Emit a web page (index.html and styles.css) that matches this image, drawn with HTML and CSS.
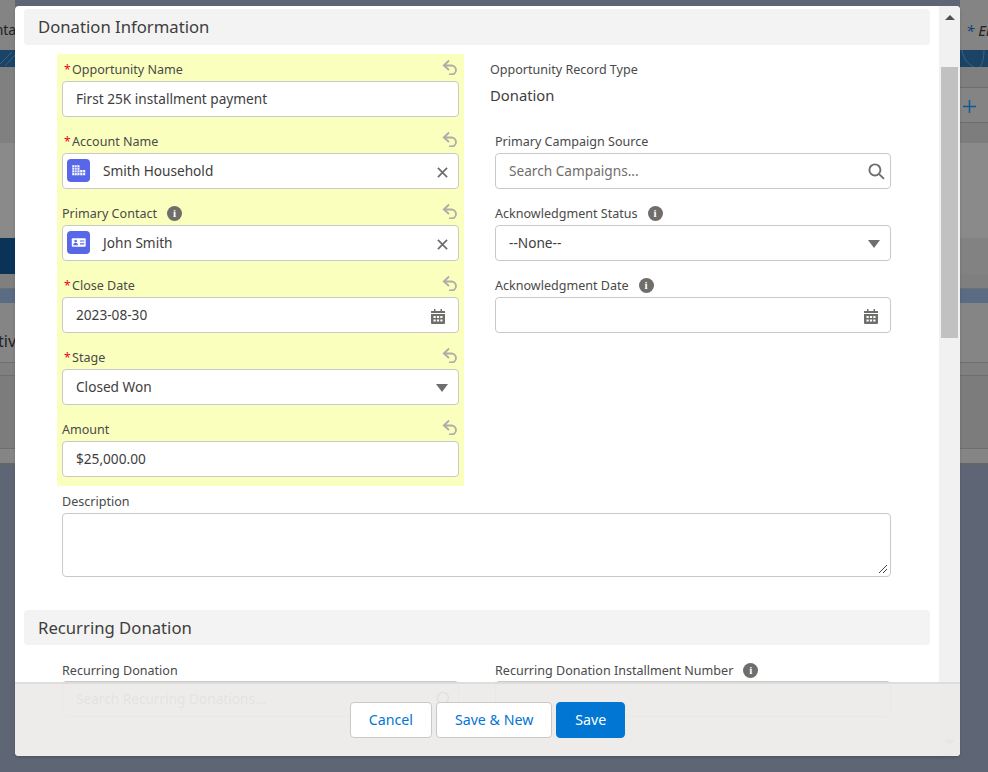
FILE: index.html
```html
<!DOCTYPE html>
<html lang="en">
<head>
<meta charset="utf-8">
<title>Donation Information</title>
<link rel="stylesheet" href="styles.css">
</head>
<body>
<div class="backdrop">
  <div class="bg-strip bg-left">
    <div class="bl bl-a"><span class="bg-nta">Contact</span></div>
    <div class="bl bl-c"><svg class="bg-arc" viewBox="0 0 15 17"><path d="M0 14 12 2M5 16 15 5"/></svg></div>
    <div class="bl bl-d"></div>
    <div class="bl bl-e"></div>
    <div class="bl bl-f"></div>
    <div class="bl bl-g"></div>
    <div class="bl bl-blue"></div>
    <div class="bl bl-h"><span class="bg-tiv">tiv</span></div>
    <div class="bl bl-i"></div>
    <div class="bl bl-j"></div>
    <div class="bl bl-k"></div>
  </div>
  <div class="bg-strip bg-right">
    <div class="bl bl-a"><span class="bg-er"><span class="bg-star">*</span>Er</span></div>
    <div class="bl bl-c"><svg class="bg-arc" viewBox="0 0 28 17"><path d="M2 0c1 9 7 15 12 17M20 17c3-4 4-10 4-17"/></svg></div>
    <div class="bl br-d"></div>
    <div class="bl br-e"><svg class="bg-plus" viewBox="0 0 13 13"><path d="M6.500 0v13M0 6.500h13"/></svg></div>
    <div class="bl br-f"></div>
    <div class="bl bl-e"></div>
    <div class="bl br-h"></div>
    <div class="bl bl-g"></div>
    <div class="bl bl-blue"></div>
    <div class="bl bl-h"></div>
    <div class="bl bl-i"></div>
    <div class="bl bl-j"></div>
    <div class="bl bl-k"></div>
  </div>
</div>

<main class="modal">
  <div class="scrollbar">
    <span class="arrow arrow-up"></span>
    <div class="thumb"></div>
    <span class="arrow arrow-down"></span>
  </div>
  <div class="content">
    <h2 class="section">Donation Information</h2>
    <div class="columns">
      <div class="col">
        <div class="highlight">
          <div class="field">
            <div class="label-row"><span class="req">*</span><label>Opportunity Name</label><svg class="undo" viewBox="0 0 16 16"><path d="M7 1.500 1.800 6.500 7 11M2 6.500h7.500a4.500 4.500 0 0 1 0 9H7"/></svg></div>
            <div class="input"><span class="value">First 25K installment payment</span></div>
          </div>
          <div class="field">
            <div class="label-row"><span class="req">*</span><label>Account Name</label><svg class="undo" viewBox="0 0 16 16"><path d="M7 1.500 1.800 6.500 7 11M2 6.500h7.500a4.500 4.500 0 0 1 0 9H7"/></svg></div>
            <div class="input lookup">
              <span class="obj"><svg viewBox="0 0 24 24"><path fill="#fff" d="M5.500 6.500H13V17H5.500zM13.800 11.500H19V17h-5.200z"/><path class="obj-grid" d="M5.500 9h7.500M5.500 11.500h7.500M5.500 14h7.500M8 6.500V17M10.500 6.500V17M13.800 14.200H19M16.400 11.500V17"/></svg></span>
              <span class="value">Smith Household</span>
              <svg class="clear" viewBox="0 0 12 12"><path d="M1 1l10 10M11 1 1 11"/></svg>
            </div>
          </div>
          <div class="field">
            <div class="label-row"><label>Primary Contact</label><span class="info">i</span><svg class="undo" viewBox="0 0 16 16"><path d="M7 1.500 1.800 6.500 7 11M2 6.500h7.500a4.500 4.500 0 0 1 0 9H7"/></svg></div>
            <div class="input lookup">
              <span class="obj"><svg viewBox="0 0 24 24"><rect x="5" y="7.500" width="14.500" height="9" rx="1" fill="#fff"/><circle cx="9" cy="10.500" r="1.400" fill="#5867e8"/><path fill="#5867e8" d="M6.500 14.800c0-1.600 1-2.200 2.500-2.200s2.500.6 2.500 2.200zM13.500 9.800H18V11h-4.500zM13.500 12.800H18V14h-4.500z"/></svg></span>
              <span class="value">John Smith</span>
              <svg class="clear" viewBox="0 0 12 12"><path d="M1 1l10 10M11 1 1 11"/></svg>
            </div>
          </div>
          <div class="field">
            <div class="label-row"><span class="req">*</span><label>Close Date</label><svg class="undo" viewBox="0 0 16 16"><path d="M7 1.500 1.800 6.500 7 11M2 6.500h7.500a4.500 4.500 0 0 1 0 9H7"/></svg></div>
            <div class="input">
              <span class="value">2023-08-30</span>
              <svg class="cal" viewBox="0 0 14 15"><path fill="#706e6b" d="M3 0h1.500v2H3zM9.500 0H11v2H9.500zM0 2h14v2H0zM0 5h14v9a1 1 0 0 1-1 1H1a1 1 0 0 1-1-1z"/><path fill="#fff" d="M2.500 7h2.200v2H2.500zM5.900 7h2.200v2H5.900zM9.300 7h2.200v2H9.300zM2.500 10.500h2.200v2H2.500zM5.900 10.500h2.200v2H5.900zM9.300 10.500h2.200v2H9.300z"/></svg>
            </div>
          </div>
          <div class="field">
            <div class="label-row"><span class="req">*</span><label>Stage</label><svg class="undo" viewBox="0 0 16 16"><path d="M7 1.500 1.800 6.500 7 11M2 6.500h7.500a4.500 4.500 0 0 1 0 9H7"/></svg></div>
            <div class="input">
              <span class="value">Closed Won</span>
              <span class="caret"></span>
            </div>
          </div>
          <div class="field">
            <div class="label-row"><label>Amount</label><svg class="undo" viewBox="0 0 16 16"><path d="M7 1.500 1.800 6.500 7 11M2 6.500h7.500a4.500 4.500 0 0 1 0 9H7"/></svg></div>
            <div class="input"><span class="value">$25,000.00</span></div>
          </div>
        </div>
      </div>
      <div class="col col-right">
        <div class="field readonly">
          <div class="label-row"><label>Opportunity Record Type</label></div>
          <div class="ro-value">Donation</div>
        </div>
        <div class="field">
          <div class="label-row"><label>Primary Campaign Source</label></div>
          <div class="input">
            <span class="placeholder">Search Campaigns...</span>
            <svg class="search" viewBox="0 0 16 16"><circle cx="6.500" cy="6.500" r="5.200"/><path d="M10.500 10.500 15 15"/></svg>
          </div>
        </div>
        <div class="field">
          <div class="label-row"><label>Acknowledgment Status</label><span class="info">i</span></div>
          <div class="input">
            <span class="value">--None--</span>
            <span class="caret"></span>
          </div>
        </div>
        <div class="field">
          <div class="label-row"><label>Acknowledgment Date</label><span class="info">i</span></div>
          <div class="input">
            <svg class="cal" viewBox="0 0 14 15"><path fill="#706e6b" d="M3 0h1.500v2H3zM9.500 0H11v2H9.500zM0 2h14v2H0zM0 5h14v9a1 1 0 0 1-1 1H1a1 1 0 0 1-1-1z"/><path fill="#fff" d="M2.500 7h2.200v2H2.500zM5.900 7h2.200v2H5.900zM9.300 7h2.200v2H9.300zM2.500 10.500h2.200v2H2.500zM5.900 10.500h2.200v2H5.900zM9.300 10.500h2.200v2H9.300z"/></svg>
          </div>
        </div>
      </div>
    </div>
    <div class="field description">
      <div class="label-row"><label>Description</label></div>
      <div class="textarea">
        <svg class="grip" viewBox="0 0 10 10"><path d="M9 1 1 9M9 5 5 9"/></svg>
      </div>
    </div>
    <h2 class="section section-2">Recurring Donation</h2>
    <div class="columns columns-2">
      <div class="col">
        <div class="field">
          <div class="label-row"><label>Recurring Donation</label></div>
          <div class="input">
            <span class="placeholder">Search Recurring Donations...</span>
            <svg class="search" viewBox="0 0 16 16"><circle cx="6.500" cy="6.500" r="5.200"/><path d="M10.500 10.500 15 15"/></svg>
          </div>
        </div>
      </div>
      <div class="col col-right">
        <div class="field">
          <div class="label-row"><label>Recurring Donation Installment Number</label><span class="info">i</span></div>
          <div class="input"></div>
        </div>
      </div>
    </div>
  </div>
  <footer class="footer">
    <button class="btn">Cancel</button>
    <button class="btn">Save &amp; New</button>
    <button class="btn btn-primary">Save</button>
  </footer>
</main>
</body>
</html>
```

FILE: styles.css
```css
* { box-sizing: border-box; }
html, body { margin: 0; height: 100%; overflow: hidden; }
body {
  width: 988px;
  height: 772px;
  background: #5e6675;
  font-family: "Noto Sans", "Open Sans", sans-serif;
  color: #3e3e3c;
  position: relative;
}
.backdrop { position: absolute; inset: 0; }
.bg-strip {
  position: absolute;
  top: 0;
  display: flex;
  flex-direction: column;
  height: 465px;
  overflow: hidden;
}
.bg-left { left: 0; width: 15px; }
.bg-right { left: 960px; width: 28px; }
.bl { width: 100%; background: #848484; position: relative; flex: none; }
.bl-a { height: 50px; }
.bl-c { height: 17px; background: #1b4366; }
.bl-d { height: 76px; background: #808080; }
.bl-e { height: 95px; background: #8a8a8a; }
.bl-f { height: 36px; background: #0b3358; }
.bl-g { height: 15px; background: #7f7f7f; border-bottom: 1px solid #6f6f6f; }
.bl-blue { height: 14px; background: #5a6b84; }
.bl-h { height: 59px; background: #858585; }
.bl-i { height: 14px; background: #808080; border-top: 1px solid #6e6e6e; border-bottom: 1px solid #6e6e6e; }
.bl-j { height: 72px; background: #7c7c7c; }
.bl-k { height: 17px; background: #858585; border-top: 1px solid #6e6e6e; border-bottom: 2px solid #666; }
.br-d { height: 21px; background: #7f7f7f; border-bottom: 1px solid #6e6e6e; }
.br-e { height: 35px; background: #848484; border-bottom: 1px solid #6e6e6e; }
.br-f { height: 20px; background: #7d7d7d; }
.br-h { height: 36px; background: #828282; }
.bg-arc { position: absolute; inset: 0; width: 100%; height: 100%; fill: none; stroke: #3a6285; stroke-width: 1; }
.bg-nta, .bg-tiv, .bg-er {
  position: absolute;
  font-size: 14px;
  line-height: 20px;
  color: #222;
  white-space: nowrap;
}
.bg-nta { top: 20px; right: -13px; }
.bg-tiv { top: 28px; left: -2px; font-size: 16px; }
.bg-er { top: 20px; left: 6px; font-style: italic; font-size: 15px; }
.bg-star { color: #0b3f70; margin-right: 4px; }
.bg-plus { position: absolute; top: 12px; left: 3px; width: 13px; height: 13px; fill: none; stroke: #0e5a97; stroke-width: 1.500; }

.modal {
  position: absolute;
  left: 15px;
  top: 6px;
  width: 945px;
  height: 750px;
  background: #fff;
  border-radius: 4px;
  overflow: hidden;
  box-shadow: 0 2px 3px rgba(0, 0, 0, .16);
}
.content { padding: 3px 9px 0 9px; width: 924px; }
.section {
  margin: 0;
  height: 36px;
  padding-left: 14px;
  background: #f3f3f3;
  border-radius: 4px;
  font-size: 16.7px;
  font-weight: 400;
  line-height: 36px;
  color: #3e3e3c;
}
.columns { display: flex; padding-left: 33px; margin-top: 9px; }
.col { width: 407px; flex: none; }
.col-right { margin-left: 31px; width: 396px; }
.highlight { background: #fbffbe; padding: 0 5px; }
.field { height: 72px; position: relative; }
.label-row {
  display: flex;
  align-items: center;
  height: 27px;
  font-size: 12.55px;
  color: #4a4a4a;
  padding-top: 3px;
}
.req { color: #ea001e; width: 8px; font-size: 12px; margin-left: 2px; }
.info {
  width: 15px;
  height: 15px;
  border-radius: 50%;
  background: #706e6b;
  color: #fff;
  font-size: 11px;
  font-weight: 700;
  line-height: 15px;
  text-align: center;
  margin-left: 10px;
  font-family: "Liberation Serif", serif;
}
.undo {
  position: absolute;
  right: 1px;
  top: 5px;
  width: 16px;
  height: 16px;
  fill: none;
  stroke: #aeaca8;
  stroke-width: 1.800;
}
.input {
  height: 36px;
  background: #fff;
  border: 1px solid #c9c9c9;
  border-radius: 4px;
  display: flex;
  align-items: center;
  padding: 0 13px 2px;
  font-size: 13.65px;
  position: relative;
}
.value { color: #3e3e3c; }
.placeholder { color: #706e6b; }
.lookup { padding-left: 4px; }
.obj {
  width: 23px;
  height: 23px;
  border-radius: 4px;
  background: #5867e8;
  flex: none;
  margin-right: 13px;
  display: flex;
}
.obj svg { width: 23px; height: 23px; }
.obj-grid { fill: none; stroke: #5867e8; stroke-width: .7; }
.clear {
  position: absolute;
  right: 10px;
  top: 13px;
  width: 11px;
  height: 11px;
  fill: none;
  stroke: #706e6b;
  stroke-width: 1.900;
}
.search {
  position: absolute;
  right: 5px;
  top: 9px;
  width: 17px;
  height: 17px;
  fill: none;
  stroke: #706e6b;
  stroke-width: 1.800;
}
.cal { position: absolute; right: 13px; top: 11px; width: 14px; height: 15px; }
.col-right .cal { right: 12px; }
.caret {
  position: absolute;
  right: 10px;
  top: 14px;
  border-left: 6px solid transparent;
  border-right: 6px solid transparent;
  border-top: 8px solid #706e6b;
}
.ro-value { font-size: 14.8px; color: #3e3e3c; line-height: 20px; margin-top: 4px; margin-left: -5px; }
.readonly .label-row { margin-left: -5px; }
.description { margin-left: 38px; height: 124px; width: 829px; }
.textarea {
  height: 64px;
  border: 1px solid #c9c9c9;
  border-radius: 4px;
  position: relative;
}
.grip {
  position: absolute;
  right: 2px;
  bottom: 2px;
  width: 10px;
  height: 10px;
  fill: none;
  stroke: #444;
  stroke-width: 1;
}
.section-2 { height: 35px; line-height: 36px; }
.columns-2 { padding-left: 38px; margin-top: 9px; }
.columns-2 .col { width: 397px; }
.columns-2 .col-right { margin-left: 36px; width: 396px; }
.columns-2 .label-row { padding-top: 5px; }
.scrollbar {
  position: absolute;
  right: 0;
  top: 0;
  width: 21px;
  height: 100%;
  background: #f1f1f1;
}
.thumb {
  position: absolute;
  left: 2px;
  top: 61px;
  width: 17px;
  height: 271px;
  background: #c1c1c1;
}
.arrow { position: absolute; left: 6px; border-left: 5px solid transparent; border-right: 5px solid transparent; }
.arrow-up { top: 9px; border-bottom: 5px solid #505050; }
.arrow-down { bottom: 11px; border-top: 5px solid #a3a3a3; }
.footer {
  position: absolute;
  left: 0;
  right: 0;
  bottom: 0;
  height: 74px;
  background: rgba(236, 235, 233, .93);
  border-top: 2px solid rgba(205, 205, 205, .5);
  display: flex;
  justify-content: center;
  gap: 4px;
  padding-top: 18px;
}
.btn {
  height: 36px;
  padding: 0 18px 2px;
  background: #fff;
  border: 1px solid #c9c9c9;
  border-radius: 4px;
  color: #0176d3;
  font: inherit;
  font-size: 14.2px;
}
.btn-primary { background: #0176d3; border-color: #0176d3; color: #fff; }
```
